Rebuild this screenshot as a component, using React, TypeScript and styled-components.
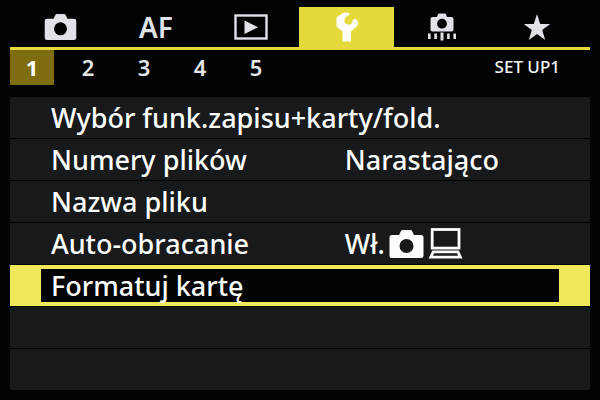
import React, { useState } from "react";
import styled, { createGlobalStyle, css } from "styled-components";

const GlobalStyle = createGlobalStyle`
  * { box-sizing: border-box; }
  body { margin: 0; background: #010202; }
  button { font: inherit; color: inherit; border: 0; padding: 0; background: none; cursor: pointer; }
`;

const Screen = styled.main`
  min-height: 100vh;
  padding: 7px 10px 10px;
  display: flex;
  flex-direction: column;
  background: #010202;
  color: #fcfdfd;
  font-family: "Noto Sans", "Open Sans", sans-serif;
  font-weight: 500;
`;

const MainTabs = styled.nav`
  display: grid;
  grid-template-columns: repeat(6, 1fr);
  padding: 0 5px 0 3px;
  border-bottom: 3px solid #e5d93b;
`;

const MainTab = styled.button<{ $active: boolean }>`
  height: 40px;
  display: flex;
  align-items: center;
  justify-content: center;
  color: ${(p) => (p.$active ? "#ffffff" : "#dfe3e8")};
  background: ${(p) => (p.$active ? "#e5d93b" : "transparent")};
`;

const TabText = styled.span`
  font-size: 28px;
  line-height: 40px;
  font-weight: 600;
`;

const PageBar = styled.div`
  display: flex;
  align-items: flex-start;
  justify-content: space-between;
  padding-right: 30px;
  margin-bottom: 12px;
`;

const Pages = styled.nav`
  display: flex;
  gap: 12px;
`;

const PageButton = styled.button<{ $active: boolean }>`
  width: 44px;
  height: 35px;
  font-size: 22px;
  line-height: 35px;
  font-weight: ${(p) => (p.$active ? 700 : 600)};
  color: ${(p) => (p.$active ? "#ffffff" : "#e4e6e8")};
  background: ${(p) => (p.$active ? "#7d6c10" : "transparent")};
`;

const PageTitle = styled.span`
  font-size: 17px;
  line-height: 33px;
  color: #f0f2f3;
`;

const Menu = styled.ul`
  flex: 1;
  margin: 0;
  padding: 0;
  list-style: none;
  display: grid;
  grid-auto-rows: minmax(40px, 1fr);
  gap: 1px;
`;

const MenuItem = styled.li<{ $selected?: boolean }>`
  display: flex;
  background: #17191a;
  ${(p) => p.$selected && css`background: #f0e95c;`}
`;

const RowButton = styled.button<{ $selected: boolean }>`
  flex: 1;
  display: flex;
  align-items: center;
  text-align: left;
  font-size: 27px;
  line-height: 32px;
  white-space: nowrap;
  padding: 0 41px;
  ${(p) =>
    p.$selected &&
    css`
      margin: 4px 31px;
      padding: 0 10px;
      background: #010202;
    `}
`;

const Label = styled.span`
  min-width: 59%;
`;

const Value = styled.span`
  display: flex;
  align-items: center;
  gap: 4px;
`;

function CameraIcon({ width, height }: { width: number; height: number }) {
  return (
    <svg width={width} height={height} viewBox="0 0 34 28" aria-hidden="true">
      <path
        fill="currentColor"
        fillRule="evenodd"
        d="M2.5 5H9.5L11.5 1Q12 0 13 0H21Q22 0 22.5 1L24.5 5H31.5Q34 5 34 7.5V25.5Q34 28 31.5 28H2.5Q0 28 0 25.5V7.5Q0 5 2.5 5ZM17 9A7 7 0 1 0 17 23A7 7 0 1 0 17 9Z"
      />
    </svg>
  );
}

function PlaybackIcon() {
  return (
    <svg width="34" height="26" viewBox="0 0 34 26" aria-hidden="true">
      <rect x="1.5" y="1.5" width="31" height="23" fill="none" stroke="currentColor" strokeWidth="2.4" />
      <path d="M10.5 6.5V20L24 13.2Z" fill="currentColor" />
    </svg>
  );
}

function WrenchIcon() {
  return (
    <svg width="24" height="30" viewBox="0 0 24 30" aria-hidden="true">
      <path
        fill="currentColor"
        d="M7.5 29.5V19.5L2.5 15.5Q1.5 14.5 1.5 13V5.5L7 1.5Q10 0 13 .6L15 2L9.5 6.5V10.5L12 12.5H15.5L17.5 10.5V8.5L20.5 6.5L23 9.5Q23.5 12 22 14L16 19.5V29.5Z"
      />
    </svg>
  );
}

function CustomIcon() {
  return (
    <svg width="30" height="28" viewBox="0 0 30 28" aria-hidden="true">
      <path
        fill="currentColor"
        fillRule="evenodd"
        d="M5.5 4H10L11 1.2Q11.4.5 12.2.5H17.8Q18.6.5 19 1.2L20 4H24.5Q26.5 4 26.5 6V16.5Q26.5 18.5 24.5 18.5H5.5Q3.5 18.5 3.5 16.5V6Q3.5 4 5.5 4ZM15 5.8A4.9 4.9 0 1 0 15 15.6A4.9 4.9 0 1 0 15 5.8Z"
      />
      <path
        fill="currentColor"
        d="M1 20.5H3.6V26H1ZM7.3 20.5H9.9V26H7.3ZM13.5 19.5H16.5V27.5H13.5ZM20.1 20.5H22.7V26H20.1ZM26.4 20.5H29V26H26.4Z"
      />
    </svg>
  );
}

function StarIcon() {
  return (
    <svg width="28" height="27" viewBox="0 0 28 27" aria-hidden="true">
      <path
        fill="currentColor"
        d="M14 0L17.2 9.9H27.2L19.2 16L22.2 26L14 20L5.8 26L8.8 16L.8 9.9H10.8Z"
      />
    </svg>
  );
}

function ComputerIcon() {
  return (
    <svg width="35" height="31" viewBox="0 0 35 31" aria-hidden="true">
      <g fill="none" stroke="currentColor" strokeWidth="2.8">
        <rect x="4.2" y="1.5" width="26.8" height="18.6" />
        <path d="M5.2 23.9H30L32.4 29.2H2.8Z" />
      </g>
    </svg>
  );
}

const mainTabs = [
  { id: "shoot", name: "Fotografowanie", content: <CameraIcon width={33} height={26} /> },
  { id: "af", name: "AF", content: <TabText>AF</TabText> },
  { id: "play", name: "Odtwarzanie", content: <PlaybackIcon /> },
  { id: "setup", name: "Ustawienia", content: <WrenchIcon /> },
  { id: "custom", name: "Funkcje indywidualne", content: <CustomIcon /> },
  { id: "my", name: "Moje menu", content: <StarIcon /> },
];

const rows: { label: string; value?: React.ReactNode }[] = [
  { label: "Wybór funk.zapisu+karty/fold." },
  { label: "Numery plików", value: "Narastająco" },
  { label: "Nazwa pliku" },
  {
    label: "Auto-obracanie",
    value: (
      <>
        Wł.
        <CameraIcon width={35} height={28} />
        <ComputerIcon />
      </>
    ),
  },
  { label: "Formatuj kartę" },
];

export default function App() {
  const [tab, setTab] = useState("setup");
  const [page, setPage] = useState(1);
  const [selected, setSelected] = useState(4);

  return (
    <Screen>
      <GlobalStyle />
      <MainTabs>
        {mainTabs.map((t) => (
          <MainTab key={t.id} $active={t.id === tab} aria-label={t.name} onClick={() => setTab(t.id)}>
            {t.content}
          </MainTab>
        ))}
      </MainTabs>
      <PageBar>
        <Pages>
          {[1, 2, 3, 4, 5].map((n) => (
            <PageButton key={n} $active={n === page} onClick={() => setPage(n)}>
              {n}
            </PageButton>
          ))}
        </Pages>
        <PageTitle>SET UP1</PageTitle>
      </PageBar>
      <Menu>
        {rows.map((row, i) => (
          <MenuItem key={row.label} $selected={i === selected}>
            <RowButton $selected={i === selected} onClick={() => setSelected(i)}>
              <Label>{row.label}</Label>
              {row.value && <Value>{row.value}</Value>}
            </RowButton>
          </MenuItem>
        ))}
        <MenuItem />
        <MenuItem />
      </Menu>
    </Screen>
  );
}
